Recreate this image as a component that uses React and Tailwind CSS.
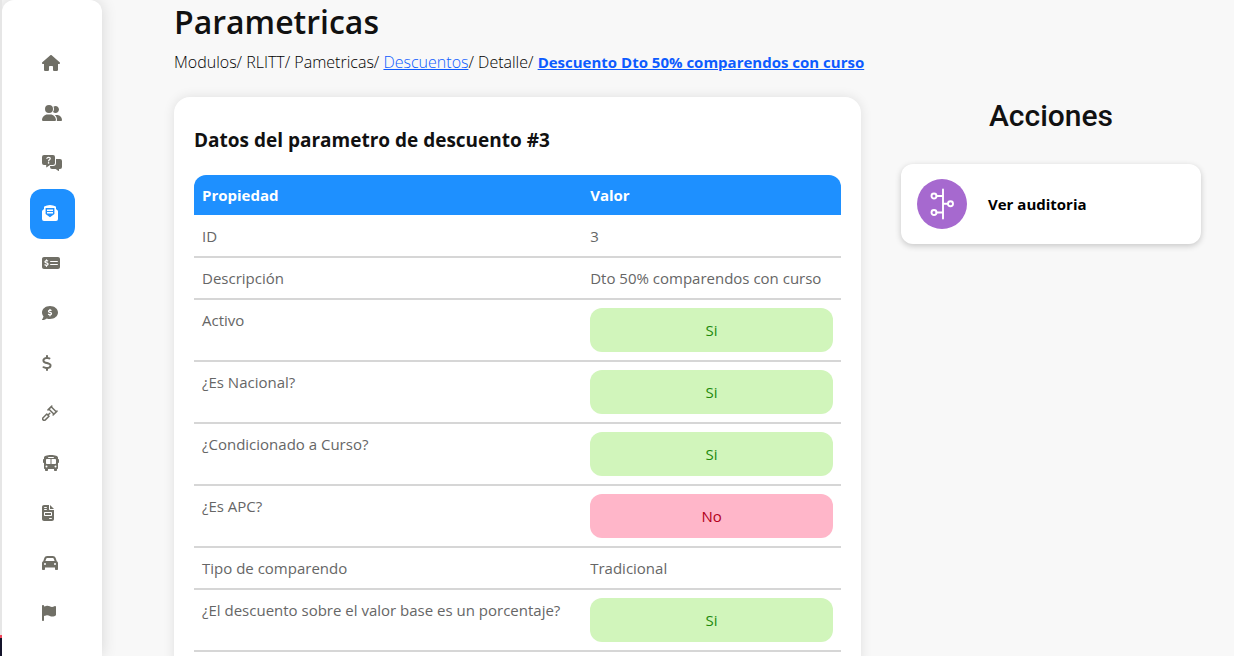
import {
  FaBus,
  FaCar,
  FaCommentDollar,
  FaDollarSign,
  FaFileInvoice,
  FaFlag,
  FaHouse,
  FaMoneyCheckDollar,
  FaUserGroup,
} from 'react-icons/fa6'

function MessagesQuestionIcon({ className }) {
  return (
    <svg viewBox="0 0 20 16" fill="currentColor" className={className}>
      <path d="M2 0h9a2 2 0 0 1 2 2v6a2 2 0 0 1-2 2H8l-3.2 2.3a.4.4 0 0 1-.6-.3v-2H2a2 2 0 0 1-2-2V2a2 2 0 0 1 2-2z" />
      <path d="M14 4h4a2 2 0 0 1 2 2v6a2 2 0 0 1-2 2h-1v1.6a.4.4 0 0 1-.6.3L13.7 14H10a2 2 0 0 1-2-2v-.7l.3-.3H11a3 3 0 0 0 3-3z" />
      <path
        d="M4.9 3.4c.2-.9.8-1.1 1.700-1.100 1.100 0 1.700.6 1.700 1.300 0 1.100-1.700 1.100-1.700 2.400"
        fill="none"
        stroke="white"
        strokeWidth="1.2"
        strokeLinecap="round"
      />
      <circle cx="6.6" cy="7.9" r=".8" fill="white" />
    </svg>
  )
}

function EnvelopeIcon({ className }) {
  return (
    <svg viewBox="0 0 16 16" fill="currentColor" className={className}>
      <path
        fillRule="evenodd"
        d="M5 .6C6.800-.1 9.200-.1 11 .6l2.200.6c.5.1.8.5.8 1v1.900l1.400 1.200c.4.3.6.7.6 1.200V14a2 2 0 0 1-2 2H2a2 2 0 0 1-2-2V6.500c0-.5.2-.9.600-1.200L2 4.100V2.200c0-.5.3-.9.8-1zM3.600 3v5.900L8 12.300l4.400-3.400V3z"
      />
      <path d="M5 4.600h6v1.300H5zM5 7.100h6v1.300H5z" />
    </svg>
  )
}

function GavelIcon({ className }) {
  return (
    <svg
      viewBox="0 0 16 16"
      fill="none"
      stroke="currentColor"
      strokeWidth="1.5"
      strokeLinecap="round"
      strokeLinejoin="round"
      className={className}
    >
      <path d="M6 4.900 9.800 1.100M11.100 10l3.900-3.900M7 4.200l4.800 4.800M9.200 1.800l5 5M7.800 8.200 6.300 9.700" />
      <path d="m4.800 9 2.200 2.200-3.700 3.700a1.500 1.500 0 0 1-2.200-2.200z" />
    </svg>
  )
}

function AuditIcon({ className }) {
  return (
    <svg viewBox="0 0 24 32" fill="none" stroke="white" strokeWidth="1.9" strokeLinecap="round" className={className}>
      <path d="M13 1.500v29M6.500 8H13M6.500 24.500H13M13 15.700h4.500" />
      <circle cx="4" cy="8" r="2.5" />
      <circle cx="4" cy="24.5" r="2.5" />
      <circle cx="20.5" cy="15.7" r="2.5" />
    </svg>
  )
}

const menu = [
  { label: 'Inicio', icon: FaHouse, size: 'w-[18px]' },
  { label: 'Usuarios', icon: FaUserGroup, size: 'w-5' },
  { label: 'PQR', icon: MessagesQuestionIcon, size: 'w-5' },
  { label: 'Parametricas', icon: EnvelopeIcon, size: 'w-4', active: true },
  { label: 'Pagos', icon: FaMoneyCheckDollar, size: 'w-[18px]' },
  { label: 'Acuerdos', icon: FaCommentDollar, size: 'w-4' },
  { label: 'Cartera', icon: FaDollarSign, size: 'w-[10px]' },
  { label: 'Procesos', icon: GavelIcon, size: 'w-4' },
  { label: 'Transporte', icon: FaBus, size: 'w-[18px]' },
  { label: 'Documentos', icon: FaFileInvoice, size: 'w-3' },
  { label: 'Vehiculos', icon: FaCar, size: 'w-4' },
  { label: 'Reportes', icon: FaFlag, size: 'w-[14px]' },
]

const rows = [
  { name: 'ID', value: '3' },
  { name: 'Descripción', value: 'Dto 50% comparendos con curso' },
  { name: 'Activo', value: true },
  { name: '¿Es Nacional?', value: true },
  { name: '¿Condicionado a Curso?', value: true },
  { name: '¿Es APC?', value: false },
  { name: 'Tipo de comparendo', value: 'Tradicional' },
  { name: '¿El descuento sobre el valor base es un porcentaje?', value: true },
]

function Sidebar() {
  return (
    <nav className="w-[100px] shrink-0 rounded-t-xl bg-white pt-[39px] shadow-[0_0_16px_rgba(0,0,0,0.14)]">
      <ul>
        {menu.map(({ label, icon: Icon, size, active }) => (
          <li key={label} className="pl-7">
            <a
              href="#"
              aria-label={label}
              className={`flex h-[50px] w-[45px] items-center rounded-xl pb-[2px] pl-3 ${
                active ? 'bg-[#1e90ff] text-white' : 'text-[#706f66]'
              }`}
            >
              <Icon className={`h-4 shrink-0 ${size}`} />
            </a>
          </li>
        ))}
      </ul>
    </nav>
  )
}

function Badge({ value }) {
  return (
    <div
      className={`rounded-xl py-[10px] text-center ${
        value ? 'bg-[#d1f5bb] text-[#1f8a0c]' : 'bg-[#ffb6c9] text-[#b3001b]'
      }`}
    >
      {value ? 'Si' : 'No'}
    </div>
  )
}

function DataTable() {
  return (
    <table className="w-full table-fixed border-separate border-spacing-0">
      <thead>
        <tr className="text-left text-white">
          <th className="w-3/5 rounded-tl-xl bg-[#1e90ff] p-2 font-bold">Propiedad</th>
          <th className="rounded-tr-xl bg-[#1e90ff] p-2 font-bold">Valor</th>
        </tr>
      </thead>
      <tbody className="align-top text-[#666] before:block before:h-px">
        {rows.map((row) => (
          <tr key={row.name}>
            <td className="border-b-2 border-[#d6d6d6] p-2">{row.name}</td>
            <td className="border-b-2 border-[#d6d6d6] p-2">
              {typeof row.value === 'boolean' ? <Badge value={row.value} /> : row.value}
            </td>
          </tr>
        ))}
      </tbody>
    </table>
  )
}

export default function App() {
  return (
    <div className="flex h-screen overflow-hidden bg-[#f8f8f8] font-['Open_Sans','Noto_Sans',sans-serif] text-[15px] leading-6 text-[#111]">
      <div className="z-10 flex w-[2px] shrink-0 flex-col bg-[#e6e6e6]">
        <div className="mt-auto h-[3px] bg-[#f0465a]" />
        <div className="h-[18px] bg-[#14142b]" />
      </div>
      <Sidebar />
      <main className="min-w-0 flex-1 pl-[72px] pr-[33px]">
        <h1 className="text-[32px] leading-[44px] font-semibold">Parametricas</h1>
        <p className="mt-[6px] text-base font-light text-black">
          Modulos/ RLITT/ Pametricas/{' '}
          <a href="#" className="text-[#0d5bff] underline">Descuentos</a>/ Detalle/{' '}
          <a href="#" className="text-[15px] font-bold text-[#0d5bff] underline">
            Descuento Dto 50% comparendos con curso
          </a>
        </p>

        <div className="mt-[23px] flex items-start gap-10">
          <section className="min-w-0 flex-1 rounded-2xl bg-white p-5 pt-7 shadow-[0_0_12px_rgba(0,0,0,0.1)]">
            <h2 className="mb-5 text-[19px] leading-[30px] font-bold">Datos del parametro de descuento #3</h2>
            <DataTable />
          </section>

          <aside className="w-[300px] shrink-0">
            <h2 className="text-center font-[Roboto,sans-serif] text-3xl leading-[38px] font-medium">Acciones</h2>
            <button
              type="button"
              className="mt-[29px] flex h-20 w-full items-center rounded-xl bg-white px-4 text-left font-bold text-black shadow-[0_2px_6px_rgba(0,0,0,0.2)]"
            >
              <span className="mr-[21px] flex size-[50px] items-center justify-center rounded-full bg-[#a669cf]">
                <AuditIcon className="h-8 w-6" />
              </span>
              Ver auditoria
            </button>
          </aside>
        </div>
      </main>
    </div>
  )
}
